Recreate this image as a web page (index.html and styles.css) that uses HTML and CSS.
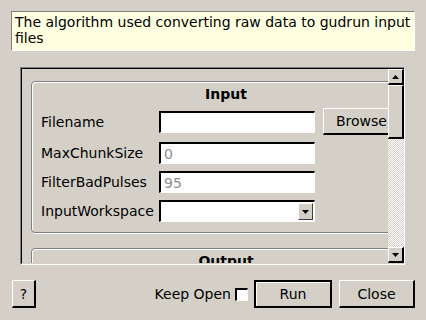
FILE: index.html
```html
<!DOCTYPE html>
<html lang="en">
<head>
    <meta charset="UTF-8">
    <title>Algorithm Dialog</title>
    <link rel="stylesheet" href="styles.css">
</head>
<body>
    <div class="dialog">
        <div class="desc">The algorithm used converting raw data to gudrun input files</div>

        <div class="scroll">
            <div class="viewport">
                <div class="content">
                    <div class="group">
                        <div class="group-title">Input</div>
                        <div class="row row-tall">
                            <label>Filename</label>
                            <input type="text" class="field">
                            <button class="btn btn-browse">Browse</button>
                        </div>
                        <div class="row">
                            <label>MaxChunkSize</label>
                            <input type="text" class="field" placeholder="0">
                        </div>
                        <div class="row">
                            <label>FilterBadPulses</label>
                            <input type="text" class="field" placeholder="95">
                        </div>
                        <div class="row">
                            <label>InputWorkspace</label>
                            <div class="combo">
                                <span class="combo-arrow">
                                    <svg width="7" height="4" viewBox="0 0 7 4"><path d="M0 0h7L3.5 4z" fill="#000"/></svg>
                                </span>
                            </div>
                        </div>
                    </div>
                    <div class="group">
                        <div class="group-title">Output</div>
                    </div>
                </div>
            </div>
            <div class="scrollbar">
                <div class="sb-btn">
                    <svg width="7" height="4" viewBox="0 0 7 4"><path d="M3.5 0L7 4H0z" fill="#000"/></svg>
                </div>
                <div class="sb-thumb"></div>
                <div class="sb-trough"></div>
                <div class="sb-btn">
                    <svg width="7" height="4" viewBox="0 0 7 4"><path d="M0 0h7L3.5 4z" fill="#000"/></svg>
                </div>
            </div>
        </div>

        <div class="footer">
            <button class="btn btn-help">?</button>
            <div class="spacer"></div>
            <span class="keep">Keep Open</span>
            <span class="check"></span>
            <button class="btn btn-run">Run</button>
            <button class="btn btn-close">Close</button>
        </div>
    </div>
</body>
</html>
```

FILE: styles.css
```css
body {
    margin: 0;
    background: #d4d0c8;
    font-family: "DejaVu Sans", sans-serif;
    font-size: 14px;
    color: #000;
}

.dialog {
    width: 426px;
    height: 320px;
    overflow: hidden;
}

.desc {
    margin: 11px 11px 0;
    width: 404px;
    height: 40px;
    box-sizing: border-box;
    padding: 2px 0 0 3px;
    background: #ffffe1;
    border-top: 1px solid #808080;
    border-left: 1px solid #808080;
    border-bottom: 1px solid #fff;
    border-right: 1px solid #fff;
    line-height: 16px;
}

.scroll {
    margin: 16px 0 0 20px;
    width: 385px;
    height: 198px;
    box-sizing: border-box;
    border-top: 1px solid #808080;
    border-left: 1px solid #808080;
    border-bottom: 1px solid #fff;
    border-right: 1px solid #fff;
    display: flex;
}

.viewport {
    flex: 1;
    overflow: hidden;
    border-top: 1px solid #000;
    border-left: 1px solid #000;
    border-bottom: 1px solid #d4d0c8;
}

.content {
    padding: 12px 0 0 9px;
    width: 400px;
}

.group {
    width: 390px;
    box-sizing: border-box;
    border: 1px solid #808080;
    box-shadow: inset 1px 1px 0 #fff, 1px 1px 0 #fff;
    border-radius: 4px;
    padding: 4px 9px 10px;
    margin-bottom: 15px;
}

.group-title {
    text-align: center;
    font-weight: bold;
    line-height: 17px;
    margin-bottom: 5px;
}

.row {
    display: flex;
    align-items: center;
    height: 22px;
    margin-bottom: 7px;
}

.row-tall {
    height: 27px;
}

.row:last-child {
    margin-bottom: 0;
}

.row label {
    width: 118px;
}

.field {
    width: 156px;
    height: 22px;
    box-sizing: border-box;
    margin: 0;
    padding: 0 0 0 3px;
    font: inherit;
    background: #fff;
    border-top: 2px solid #000;
    border-left: 2px solid #000;
    border-bottom: 1px solid #fff;
    border-right: 1px solid #fff;
    outline: none;
}

.field::placeholder {
    color: #8e8e8e;
}

.combo {
    width: 156px;
    height: 22px;
    box-sizing: border-box;
    background: #fff;
    border-top: 2px solid #000;
    border-left: 2px solid #000;
    border-bottom: 1px solid #fff;
    border-right: 1px solid #fff;
    display: flex;
    justify-content: flex-end;
    padding: 1px 1px 1px 0;
}

.combo-arrow {
    width: 15px;
    background: #d4d0c8;
    box-sizing: border-box;
    border-top: 1px solid #fff;
    border-left: 1px solid #fff;
    border-bottom: 1px solid #404040;
    border-right: 1px solid #404040;
    display: flex;
    align-items: center;
    justify-content: center;
}

.btn {
    font: inherit;
    color: #000;
    background: #d4d0c8;
    box-sizing: border-box;
    margin: 0;
    padding: 0;
    border-top: 1px solid #fff;
    border-left: 1px solid #fff;
    border-bottom: 2px solid #000;
    border-right: 2px solid #000;
}

.btn-browse {
    margin-left: 8px;
    width: 76px;
    height: 27px;
    text-align: left;
    padding-left: 12px;
}

.scrollbar {
    width: 16px;
    display: flex;
    flex-direction: column;
    border-top: 1px solid #000;
    border-bottom: 1px solid #d4d0c8;
}

.sb-btn, .sb-thumb {
    box-sizing: border-box;
    background: #d4d0c8;
    border-top: 1px solid #fff;
    border-left: 1px solid #fff;
    border-bottom: 2px solid #000;
    border-right: 2px solid #000;
}

.sb-btn {
    height: 16px;
    display: flex;
    align-items: center;
    justify-content: center;
}

.sb-thumb {
    height: 54px;
}

.sb-trough {
    flex: 1;
    background: repeating-conic-gradient(#fff 0 25%, #d4d0c8 0 50%) 0 0 / 2px 2px;
}

.footer {
    display: flex;
    align-items: center;
    margin: 15px 0 0 12px;
    width: 403px;
    height: 28px;
}

.btn-help {
    width: 24px;
    height: 28px;
}

.spacer {
    flex: 1;
}

.keep {
    margin-right: 4px;
}

.check {
    width: 13px;
    height: 13px;
    box-sizing: border-box;
    background: #fff;
    border-top: 2px solid #000;
    border-left: 2px solid #000;
    border-bottom: 1px solid #fff;
    border-right: 1px solid #fff;
    margin-right: 6px;
}

.btn-run {
    width: 78px;
    height: 28px;
    border: 2px solid #000;
    box-shadow: inset 1px 1px 0 #fff;
}

.btn-close {
    width: 76px;
    height: 28px;
    margin-left: 7px;
}
```
